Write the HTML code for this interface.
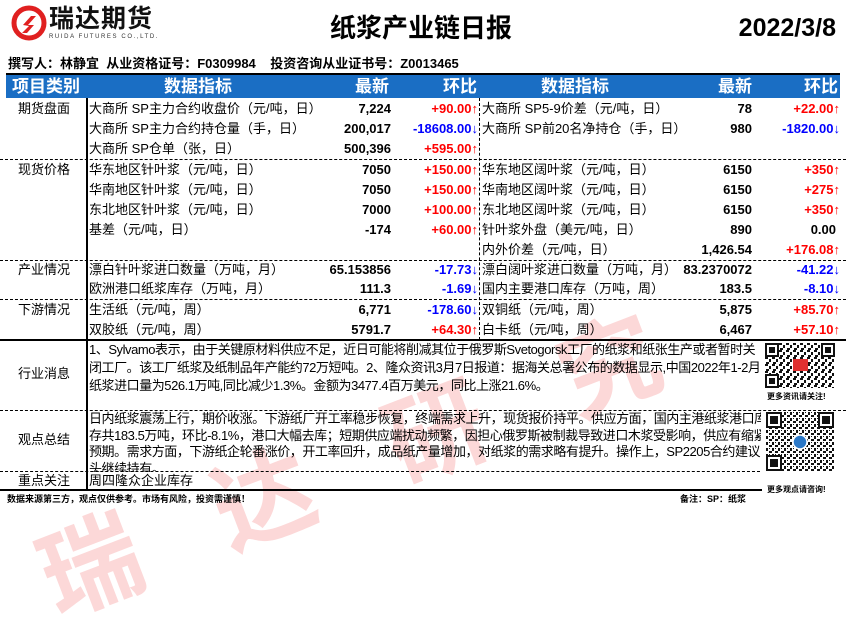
<!DOCTYPE html>
<html><head><meta charset="utf-8"><style>
*{margin:0;padding:0;box-sizing:border-box}
body{width:846px;height:605px;background:#fff;position:relative;overflow:hidden;font-family:"Liberation Sans","Noto Sans CJK SC",sans-serif;font-size:13px;color:#000}
.a{position:absolute;white-space:nowrap}
.r{text-align:right}
.b{font-weight:bold}
.red{color:#f00;font-weight:bold}
.blu{color:#00f;font-weight:bold}
.hd{position:absolute;top:75px;height:23px;color:#fff;font-size:17px;font-weight:bold;line-height:23px}
.dash{position:absolute;left:0;height:0;border-top:1.5px dashed #000}
.cat{position:absolute;left:0;width:88px;text-align:center}
.txt{position:absolute;left:89px;width:672px;font-size:13px;letter-spacing:-0.45px;overflow:hidden}
.txt div{white-space:nowrap}
</style></head><body>

<div class="a b" style="left:45px;top:535px;font-size:100px;line-height:100px;color:rgba(240,40,40,0.18);transform:rotate(-21deg);transform-origin:0 50%;letter-spacing:85px">瑞达研究</div>

<svg class="a" style="left:11px;top:5px" width="36" height="36" viewBox="0 0 36 36">
<circle cx="18" cy="18" r="15" fill="none" stroke="#e02020" stroke-width="5"/>
<path d="M12 20 L20 11 L25 11 L17 20 L23 20 L16 28 L11 28 L18 21 Z" fill="#e02020"/>
</svg>
<div class="a b" style="left:49px;top:4px;font-size:25px;line-height:30px;letter-spacing:1px;color:#111">瑞达期货</div>
<div class="a" style="left:49px;top:34px;font-size:6px;letter-spacing:1.6px;color:#333">RUIDA FUTURES CO.,LTD.</div>

<div class="a b" style="left:330px;top:12px;font-size:26px;line-height:32px">纸浆产业链日报</div>
<div class="a b" style="right:10px;top:12px;font-size:25px;line-height:32px">2022/3/8</div>

<div class="a b" style="left:8px;top:56px;font-size:13px;line-height:16px">撰写人：林静宜&nbsp;&nbsp;从业资格证号：F0309984&nbsp;&nbsp;&nbsp;&nbsp;投资咨询从业证书号：Z0013465</div>

<div class="a" style="left:6px;top:73px;width:834px;height:2px;background:#000"></div>
<div class="a" style="left:6px;top:75px;width:834px;height:23px;background:#1a6ec4"></div>
<div class="hd" style="left:12px">项目类别</div>
<div class="hd" style="left:164px">数据指标</div>
<div class="hd" style="left:355px">最新</div>
<div class="hd" style="left:443px">环比</div>
<div class="hd" style="left:541px">数据指标</div>
<div class="hd" style="left:718px">最新</div>
<div class="hd" style="left:804px">环比</div>

<div class="a" style="left:86px;top:98px;width:2px;height:392px;background:#000"></div>
<div class="a" style="left:479px;top:98px;height:242px;border-left:1.5px dashed #000"></div>

<div class="dash" style="top:159px;width:846px"></div>
<div class="dash" style="top:260px;width:846px"></div>
<div class="dash" style="top:299px;width:846px"></div>
<div class="a" style="left:0;top:339px;width:846px;height:2px;background:#000"></div>
<div class="dash" style="top:410px;width:846px"></div>
<div class="dash" style="top:471px;width:760px"></div>
<div class="a" style="left:0;top:489px;width:762px;height:2px;background:#000"></div>

<div style="position:absolute;left:0;top:99px;width:846px;line-height:20px">
<div class="cat" style="top:0">期货盘面</div>
<div class="a" style="left:89px;top:0">大商所 SP主力合约收盘价（元/吨，日）</div>
<div class="a" style="left:89px;top:20px">大商所 SP主力合约持仓量（手，日）</div>
<div class="a" style="left:89px;top:40px">大商所 SP仓单（张，日）</div>
<div class="a b r" style="right:455px;top:0">7,224</div>
<div class="a b r" style="right:455px;top:20px">200,017</div>
<div class="a b r" style="right:455px;top:40px">500,396</div>
<div class="a red r" style="right:368px;top:0">+90.00↑</div>
<div class="a blu r" style="right:368px;top:20px">-18608.00↓</div>
<div class="a red r" style="right:368px;top:40px">+595.00↑</div>
<div class="a" style="left:482px;top:0">大商所 SP5-9价差（元/吨，日）</div>
<div class="a" style="left:482px;top:20px">大商所 SP前20名净持仓（手，日）</div>
<div class="a b r" style="right:94px;top:0">78</div>
<div class="a b r" style="right:94px;top:20px">980</div>
<div class="a red r" style="right:6px;top:0">+22.00↑</div>
<div class="a blu r" style="right:6px;top:20px">-1820.00↓</div>

<div class="cat" style="top:61px">现货价格</div>
<div class="a" style="left:89px;top:61px">华东地区针叶浆（元/吨，日）</div>
<div class="a" style="left:89px;top:81px">华南地区针叶浆（元/吨，日）</div>
<div class="a" style="left:89px;top:101px">东北地区针叶浆（元/吨，日）</div>
<div class="a" style="left:89px;top:121px">基差（元/吨，日）</div>
<div class="a b r" style="right:455px;top:61px">7050</div>
<div class="a b r" style="right:455px;top:81px">7050</div>
<div class="a b r" style="right:455px;top:101px">7000</div>
<div class="a b r" style="right:455px;top:121px">-174</div>
<div class="a red r" style="right:368px;top:61px">+150.00↑</div>
<div class="a red r" style="right:368px;top:81px">+150.00↑</div>
<div class="a red r" style="right:368px;top:101px">+100.00↑</div>
<div class="a red r" style="right:368px;top:121px">+60.00↑</div>
<div class="a" style="left:482px;top:61px">华东地区阔叶浆（元/吨，日）</div>
<div class="a" style="left:482px;top:81px">华南地区阔叶浆（元/吨，日）</div>
<div class="a" style="left:482px;top:101px">东北地区阔叶浆（元/吨，日）</div>
<div class="a" style="left:482px;top:121px">针叶浆外盘（美元/吨，日）</div>
<div class="a" style="left:482px;top:141px">内外价差（元/吨，日）</div>
<div class="a b r" style="right:94px;top:61px">6150</div>
<div class="a b r" style="right:94px;top:81px">6150</div>
<div class="a b r" style="right:94px;top:101px">6150</div>
<div class="a b r" style="right:94px;top:121px">890</div>
<div class="a b r" style="right:94px;top:141px">1,426.54</div>
<div class="a red r" style="right:6px;top:61px">+350↑</div>
<div class="a red r" style="right:6px;top:81px">+275↑</div>
<div class="a red r" style="right:6px;top:101px">+350↑</div>
<div class="a b r" style="right:10px;top:121px">0.00</div>
<div class="a red r" style="right:6px;top:141px">+176.08↑</div>

<div class="cat" style="top:161px">产业情况</div>
<div class="a" style="left:89px;top:161px">漂白针叶浆进口数量（万吨，月）</div>
<div class="a" style="left:89px;top:180px">欧洲港口纸浆库存（万吨，月）</div>
<div class="a b r" style="right:455px;top:161px">65.153856</div>
<div class="a b r" style="right:455px;top:180px">111.3</div>
<div class="a blu r" style="right:368px;top:161px">-17.73↓</div>
<div class="a blu r" style="right:368px;top:180px">-1.69↓</div>
<div class="a" style="left:482px;top:161px">漂白阔叶浆进口数量（万吨，月）</div>
<div class="a" style="left:482px;top:180px">国内主要港口库存（万吨，周）</div>
<div class="a b r" style="right:94px;top:161px">83.2370072</div>
<div class="a b r" style="right:94px;top:180px">183.5</div>
<div class="a blu r" style="right:6px;top:161px">-41.22↓</div>
<div class="a blu r" style="right:6px;top:180px">-8.10↓</div>

<div class="cat" style="top:201px">下游情况</div>
<div class="a" style="left:89px;top:201px">生活纸（元/吨，周）</div>
<div class="a" style="left:89px;top:221px">双胶纸（元/吨，周）</div>
<div class="a b r" style="right:455px;top:201px">6,771</div>
<div class="a b r" style="right:455px;top:221px">5791.7</div>
<div class="a blu r" style="right:368px;top:201px">-178.60↓</div>
<div class="a red r" style="right:368px;top:221px">+64.30↑</div>
<div class="a" style="left:482px;top:201px">双铜纸（元/吨，周）</div>
<div class="a" style="left:482px;top:221px">白卡纸（元/吨，周）</div>
<div class="a b r" style="right:94px;top:201px">5,875</div>
<div class="a b r" style="right:94px;top:221px">6,467</div>
<div class="a red r" style="right:6px;top:201px">+85.70↑</div>
<div class="a red r" style="right:6px;top:221px">+57.10↑</div>
</div>

<div class="cat" style="top:364px;line-height:20px">行业消息</div>
<div class="txt" style="top:341px;line-height:18px">
<div>1、Sylvamo表示，由于关键原材料供应不足，近日可能将削减其位于俄罗斯Svetogorsk工厂的纸浆和纸张生产或者暂时关</div>
<div>闭工厂。该工厂纸浆及纸制品年产能约72万短吨。2、隆众资讯3月7日报道：据海关总署公布的数据显示,中国2022年1-2月</div>
<div>纸浆进口量为526.1万吨,同比减少1.3%。金额为3477.4百万美元，同比上涨21.6%。</div>
</div>
<div class="cat" style="top:430px;line-height:20px">观点总结</div>
<div class="txt" style="top:411px;line-height:16.5px;height:61px">
<div>日内纸浆震荡上行，期价收涨。下游纸厂开工率稳步恢复，终端需求上升，现货报价持平。供应方面，国内主港纸浆港口库</div>
<div>存共183.5万吨，环比-8.1%，港口大幅去库；短期供应端扰动频繁，因担心俄罗斯被制裁导致进口木浆受影响，供应有缩紧</div>
<div>预期。需求方面，下游纸企轮番涨价，开工率回升，成品纸产量增加，对纸浆的需求略有提升。操作上，SP2205合约建议多</div>
<div>头继续持有。</div>
</div>
<div class="cat" style="top:472px;line-height:18px">重点关注</div>
<div class="a" style="left:89px;top:472px;line-height:18px">周四隆众企业库存</div>

<div class="a b" style="left:7px;top:493px;font-size:9px;line-height:12px">数据来源第三方，观点仅供参考。市场有风险，投资需谨慎！</div>
<div class="a b" style="left:680px;top:493px;font-size:9px;line-height:12px">备注：SP：纸浆</div>

<svg class="a" style="left:765px;top:343px" width="70" height="45" viewBox="0 0 70 45">
<defs><pattern id="p1" width="7" height="7" patternUnits="userSpaceOnUse"><rect width="7" height="7" fill="#fff"/><rect x="0" y="0" width="3" height="2" fill="#111"/><rect x="4" y="2" width="2" height="3" fill="#111"/><rect x="1" y="5" width="3" height="2" fill="#111"/></pattern></defs>
<rect width="70" height="45" fill="url(#p1)"/>
<rect x="1" y="1" width="12" height="12" fill="#fff" stroke="#111" stroke-width="2"/><rect x="4" y="4" width="6" height="6" fill="#111"/>
<rect x="57" y="1" width="12" height="12" fill="#fff" stroke="#111" stroke-width="2"/><rect x="60" y="4" width="6" height="6" fill="#111"/>
<rect x="1" y="32" width="12" height="12" fill="#fff" stroke="#111" stroke-width="2"/><rect x="4" y="35" width="6" height="6" fill="#111"/>
<rect x="28" y="16" width="15" height="12" fill="#e03030"/>
</svg>
<div class="a b" style="left:767px;top:391px;font-size:8px">更多资讯请关注!</div>
<svg class="a" style="left:766px;top:412px" width="68" height="59" viewBox="0 0 68 59">
<defs><pattern id="p2" width="6" height="6" patternUnits="userSpaceOnUse"><rect width="6" height="6" fill="#fff"/><rect x="0" y="0" width="2" height="3" fill="#111"/><rect x="3" y="3" width="3" height="2" fill="#111"/><rect x="3" y="0" width="1" height="1" fill="#111"/></pattern></defs>
<rect width="68" height="59" fill="url(#p2)"/>
<rect x="1" y="1" width="14" height="14" fill="#fff" stroke="#111" stroke-width="2"/><rect x="4" y="4" width="8" height="8" fill="#111"/>
<rect x="53" y="1" width="14" height="14" fill="#fff" stroke="#111" stroke-width="2"/><rect x="56" y="4" width="8" height="8" fill="#111"/>
<rect x="1" y="44" width="14" height="14" fill="#fff" stroke="#111" stroke-width="2"/><rect x="4" y="47" width="8" height="8" fill="#111"/>
<circle cx="34" cy="30" r="7" fill="#2a78c8" stroke="#fff" stroke-width="1.5"/>
</svg>
<div class="a b" style="left:767px;top:484px;font-size:8px">更多观点请咨询!</div>
</body></html>
